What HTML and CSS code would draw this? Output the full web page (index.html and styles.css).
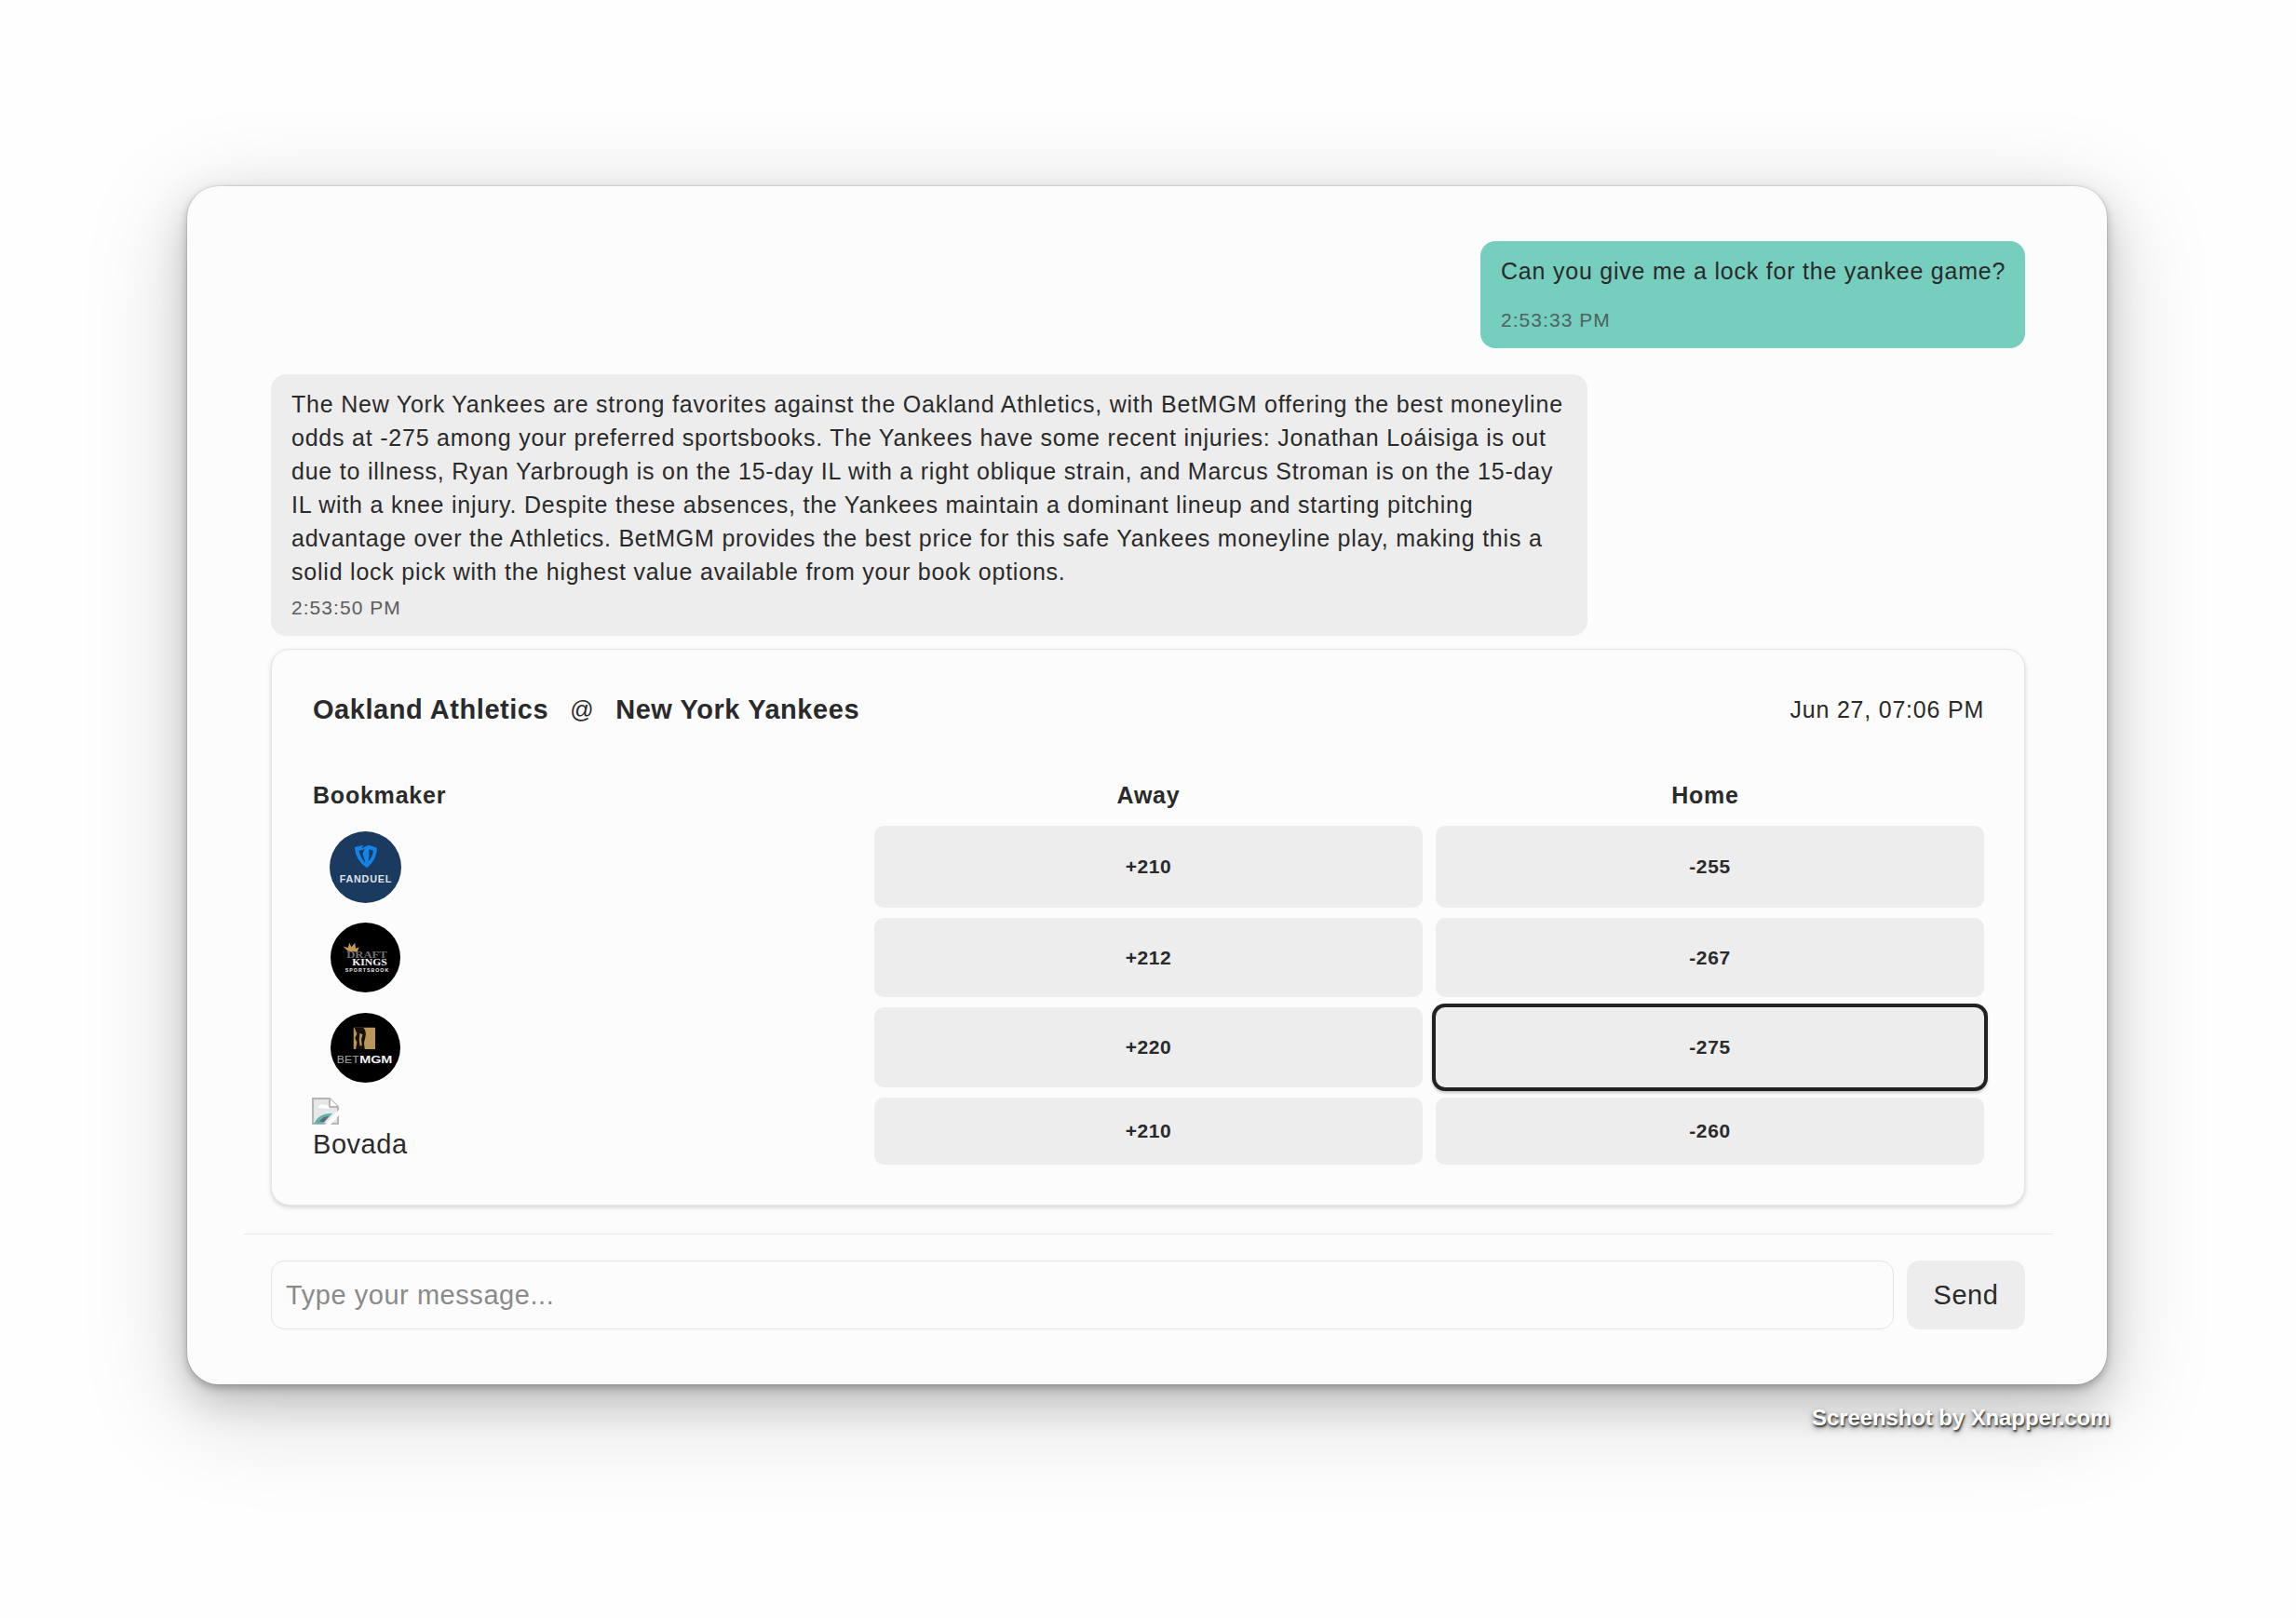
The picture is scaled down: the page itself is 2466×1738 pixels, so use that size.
FILE: index.html
```html
<!DOCTYPE html>
<html lang="en">
<head>
<meta charset="utf-8">
<title>Chat</title>
<link rel="stylesheet" href="styles.css">
</head>
<body>
<main class="window">
  <section class="messages">
    <div class="bubble bubble-user">
      <p class="bubble-text bubble-text-user">Can you give me a lock for the yankee game?</p>
      <time class="stamp stamp-user">2:53:33 PM</time>
    </div>
    <div class="bubble bubble-bot">
      <p class="bubble-text">The New York Yankees are strong favorites against the Oakland Athletics, with BetMGM offering the best moneyline odds at -275 among your preferred sportsbooks. The Yankees have some recent injuries: Jonathan Loáisiga is out due to illness, Ryan Yarbrough is on the 15-day IL with a right oblique strain, and Marcus Stroman is on the 15-day IL with a knee injury. Despite these absences, the Yankees maintain a dominant lineup and starting pitching advantage over the Athletics. BetMGM provides the best price for this safe Yankees moneyline play, making this a solid lock pick with the highest value available from your book options.</p>
      <time class="stamp">2:53:50 PM</time>
    </div>
    <article class="card">
      <header class="card-head">
        <h2 class="matchup"><span>Oakland Athletics</span><span class="at">@</span><span>New York Yankees</span></h2>
        <div class="date">Jun 27, 07:06 PM</div>
      </header>
      <div class="odds">
        <div class="col-head col-book">Bookmaker</div>
        <div class="col-head col-mid">Away</div>
        <div class="col-head col-mid col-home">Home</div>

        <div class="book">
          <svg class="logo logo-fd" viewBox="0 0 100 100" role="img" aria-label="FanDuel">
            <circle cx="50" cy="50" r="50" fill="#1b3a60"/>
            <path d="M35 22 L47 19 L45 24 L50 21 L55 19 L66 23 Q67 38 52 51 Q36 40 35 23Z" fill="#1583e6"/>
            <path d="M41 27 L49 25 L46 31 L50 44 Q43 37 41 27Z M55 25 L61 27 Q60 36 54 42 Q56 34 55 25Z" fill="#1b3a60"/>
            <text x="50" y="71" class="logo-t fd-t" textLength="72" lengthAdjust="spacing">FANDUEL</text>
          </svg>
        </div>
        <div class="price">+210</div>
        <div class="price">-255</div>

        <div class="book">
          <svg class="logo logo-sm" viewBox="0 0 100 100" role="img" aria-label="DraftKings">
            <circle cx="50" cy="50" r="50" fill="#000"/>
            <path d="M18 34 L25 36 L27 29 L30 35 L35 29 L36 37 L41 35 L38 42 L25 41Z" fill="#c29a58"/>
            <text x="52" y="51" class="logo-t dk-d" textLength="58" lengthAdjust="spacingAndGlyphs">DRAFT</text>
            <text x="56" y="61.5" class="logo-t dk-k" textLength="50" lengthAdjust="spacingAndGlyphs">KINGS</text>
            <text x="52" y="71" class="logo-t dk-s" textLength="62" lengthAdjust="spacing">SPORTSBOOK</text>
          </svg>
        </div>
        <div class="price">+212</div>
        <div class="price">-267</div>

        <div class="book">
          <svg class="logo logo-sm" viewBox="0 0 100 100" role="img" aria-label="BetMGM">
            <circle cx="50" cy="50" r="50" fill="#000"/>
            <rect x="33" y="21" width="31" height="31" fill="#bb9658"/>
            <path d="M34 21 L47 21 Q52 27 50 34 L48 43 L49 52 L36 52 L38 42 L35 36 L38 30Z" fill="#14110c"/>
            <path d="M42 29 L46 31 L44 38 L45 47 L42 47 L41 38Z" fill="#bb9658"/>
            <text x="25" y="72" class="logo-t mgm-b" textLength="32" lengthAdjust="spacingAndGlyphs">BET</text>
            <text x="65" y="72" class="logo-t mgm-m" textLength="47" lengthAdjust="spacingAndGlyphs">MGM</text>
          </svg>
        </div>
        <div class="price">+220</div>
        <div class="price price-best">-275</div>

        <div class="book book-broken">
          <svg class="broken" viewBox="0 0 29 29" role="img" aria-label="Broken image">
            <path d="M1 1 H19 L28 10 V28 H1Z" fill="#e6e7e7" stroke="#b5b5b5" stroke-width="2"/>
            <path d="M19 1 V10 H28" fill="#fff" stroke="#b5b5b5" stroke-width="2"/>
            <path d="M6 11 Q10 5 14 8 Q18 7 19 12Z" fill="#fff"/>
            <path d="M2 28 Q8 16 22 17 L12 28Z" fill="#5fb3a6"/>
            <path d="M8 26 Q12 20 18 20 L13 26Z" fill="#667"/>
            <path d="M14 29 L29 13 V19 L20 29Z" fill="#fdfdfd"/>
          </svg>
          <span class="book-alt">Bovada</span>
        </div>
        <div class="price">+210</div>
        <div class="price">-260</div>
      </div>
    </article>
  </section>
  <footer class="composer">
    <input class="composer-input" type="text" placeholder="Type your message...">
    <button class="send" type="button">Send</button>
  </footer>
</main>
<div class="watermark">Screenshot by Xnapper.com</div>
</body>
</html>
```
FILE: styles.css
```css
* { box-sizing: border-box; }
html, body { margin: 0; }
body {
  width: 2466px;
  height: 1738px;
  overflow: hidden;
  padding: 200px 0 0 201px;
  background: #fefefe;
  color: #2a2a2a;
  font-family: "Liberation Sans", Arial, sans-serif;
  letter-spacing: 0.78px;
}
.window {
  width: 2062px;
  height: 1287px;
  background: #fcfcfc;
  border-radius: 34px;
  box-shadow: 0 0 0 1px rgba(0,0,0,.07), 0 4px 10px rgba(0,0,0,.26), 0 18px 44px rgba(0,0,0,.19), 0 26px 110px 10px rgba(0,0,0,.13);
  display: flex;
  flex-direction: column;
}
.messages {
  padding: 59px 88px 0 90px;
  display: flex;
  flex-direction: column;
}
.bubble {
  border-radius: 16px;
  padding: 14px 21px 0 22px;
}
.bubble-text { margin: 0; font-size: 25px; line-height: 36px; }
.bubble-text-user { white-space: nowrap; }
.stamp { display: block; font-size: 21px; line-height: 26px; color: #5c5c5c; letter-spacing: 1.05px; margin-top: 8px; }
.bubble-user {
  align-self: flex-end;
  width: 585px;
  height: 115px;
  background: #76cebe;
}
.stamp-user { margin-top: 22px; color: #4f625e; }
.bubble-bot {
  margin-top: 28px;
  width: 1414px;
  height: 281px;
  background: #ededed;
}
.card {
  margin-top: 14px;
  height: 598px;
  border: 1px solid #e6e6e6;
  border-radius: 20px;
  padding: 42px 43px 0 44px;
  box-shadow: 0 2px 5px rgba(0,0,0,.16);
  background: #fcfcfc;
}
.card-head { display: flex; justify-content: space-between; align-items: center; height: 44px; }
.matchup { margin: 0; font-size: 29px; font-weight: 700; letter-spacing: 0.55px; display: flex; align-items: center; gap: 23px; }
.at { font-weight: 400; font-size: 25px; }
.date { font-size: 25px; }
.odds {
  margin-top: 49px;
  display: grid;
  grid-template-columns: repeat(3, 589px);
  grid-template-rows: 43px 88px 85px 86px 72px;
  column-gap: 14px;
  row-gap: 11px;
}
.odds > .col-head { align-self: center; }
.col-head { font-size: 25px; font-weight: 700; }
.col-mid { text-align: center; }
.col-home { padding-right: 10px; }
.book { display: flex; align-items: center; padding-left: 18px; }
.logo { display: block; }
.logo-fd { width: 77px; height: 77px; }
.logo-sm { width: 75px; height: 75px; margin-left: 1px; }
.logo-t { font-family: "Liberation Sans", Arial, sans-serif; text-anchor: middle; letter-spacing: 0; }
.fd-t { font-size: 14px; font-weight: 700; fill: #dfe3e8; }
.dk-d { font-family: "Liberation Serif", serif; font-size: 15px; font-weight: 700; fill: #707070; }
.dk-k { font-family: "Liberation Serif", serif; font-size: 14px; font-weight: 700; fill: #f2f2f2; }
.dk-s { font-size: 7px; font-weight: 700; fill: #e8e8e8; }
.mgm-b { font-size: 15px; fill: #a5a5a5; }
.mgm-m { font-size: 15px; font-weight: 700; fill: #f2f2f2; }
.book-broken { flex-direction: column; align-items: flex-start; padding-left: 0; }
.broken { width: 29px; height: 29px; display: block; flex: none; margin-left: -1px; }
.book-alt { font-size: 29px; line-height: 36px; margin-top: 3px; letter-spacing: 0.55px; }
.price {
  background: #ededed;
  border-radius: 10px;
  display: flex;
  align-items: center;
  justify-content: center;
  font-size: 21px;
  font-weight: 700;
  letter-spacing: 0.6px;
}
.price-best { box-shadow: 0 0 0 4px #222, 0 2px 3px 4px rgba(0,0,0,.2); }
.composer {
  margin: 30px 58px 0 61px;
  border-top: 1px solid #e8e8e8;
  padding: 28px 30px 0 29px;
  display: flex;
  gap: 14px;
}
.composer-input {
  flex: 1;
  min-width: 0;
  height: 74px;
  border: 1px solid #e4e4e4;
  border-radius: 14px;
  background: #fcfcfc;
  padding: 0 15px;
  font: inherit;
  font-size: 29px;
  letter-spacing: 0.55px;
  color: #2a2a2a;
}
.composer-input::placeholder { color: #8a8a8a; opacity: 1; }
.send {
  width: 127px;
  height: 74px;
  border: 0;
  border-radius: 14px;
  background: #ededed;
  font: inherit;
  font-size: 29px;
  letter-spacing: 0.55px;
  color: #2a2a2a;
}
.watermark {
  position: absolute;
  left: 1946px;
  top: 1509px;
  font-size: 24px;
  font-weight: 700;
  letter-spacing: -0.1px;
  color: #fff;
  text-shadow: 1px 2px 2px rgba(0,0,0,.7), 0 3px 6px rgba(0,0,0,.5);
}
```
